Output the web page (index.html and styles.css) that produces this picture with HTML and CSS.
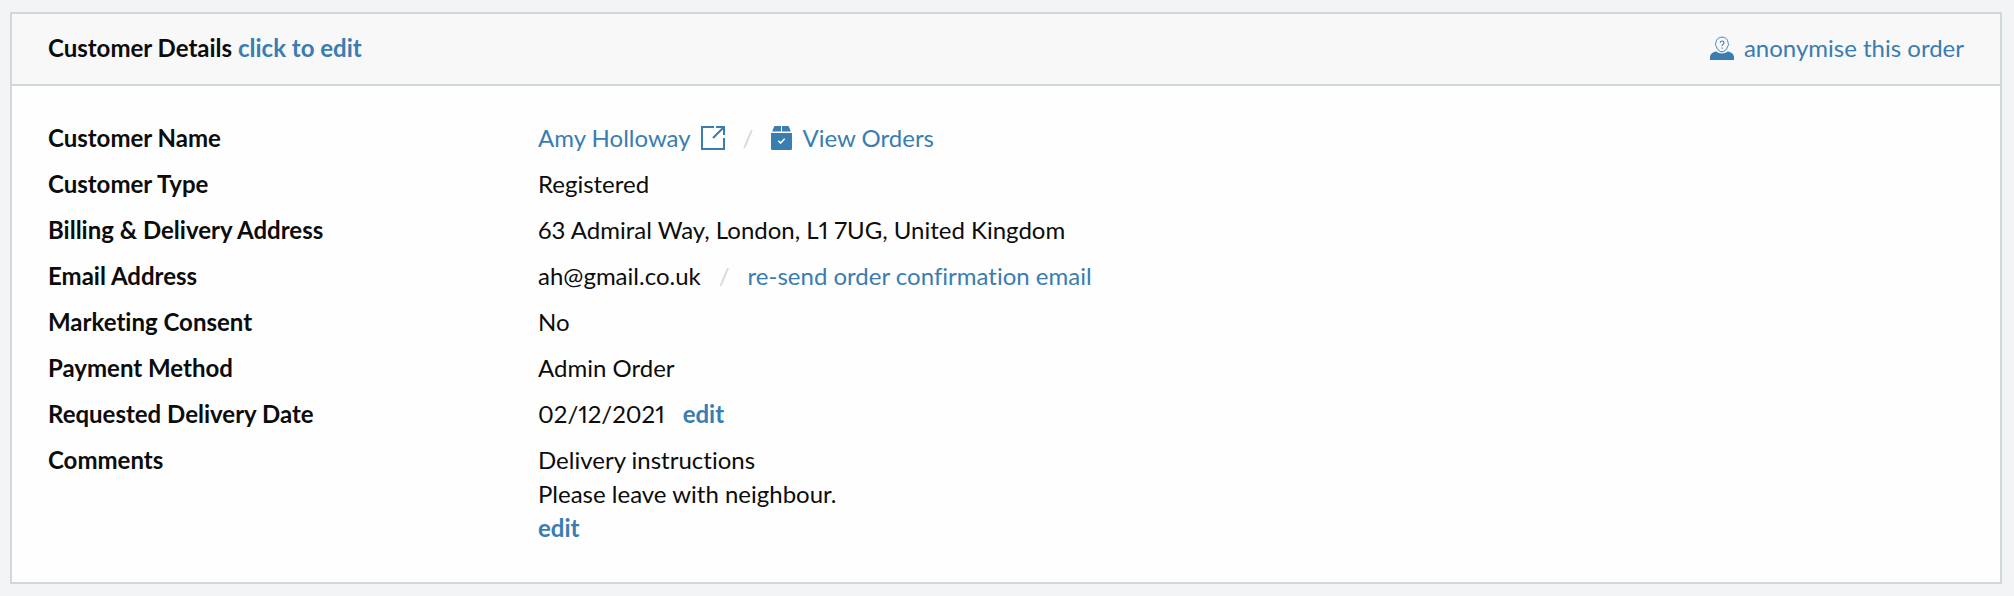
FILE: index.html
```html
<!DOCTYPE html>
<html lang="en">
<head>
    <meta charset="UTF-8">
    <meta name="viewport" content="width=device-width, initial-scale=1.0">
    <title>Customer Details</title>
    <link rel="stylesheet" href="styles.css">
</head>
<body>
    <section class="panel">
        <header class="panel-header">
            <h2 class="panel-title">Customer Details <a href="#edit">click to edit</a></h2>
            <a class="icon-link" href="#anonymise">
                <svg class="icon" width="24" height="24" viewBox="0 0 24 24" fill="none" xmlns="http://www.w3.org/2000/svg" aria-hidden="true">
                    <path d="M0 24v-2.500c0-3.500 2.500-5.500 6.300-6 1.500 1.300 3.500 2 5.700 2s4.200-.7 5.700-2c3.800.5 6.300 2.500 6.300 6V24z" fill="currentColor"/>
                    <path d="M12 1.200c-3.800 0-6 2.600-6 5.600 0 .5-.7.700-.6 1.700.1 1 .8 1.300 1.100 2.200.8 2.900 3 5.100 5.500 5.100s4.700-2.200 5.500-5.100c.3-.9 1-1.200 1.100-2.200.1-1-.6-1.200-.6-1.700 0-3-2.200-5.600-6-5.600z" stroke="currentColor"/>
                    <path d="M10.200 6.700c.1-1.100.9-1.700 1.900-1.700 1.100 0 1.900.7 1.900 1.700 0 1.500-1.900 1.500-1.900 3.400M12.100 11.500v1.300" stroke="currentColor" stroke-width="1.100"/>
                </svg>
                <span>anonymise this order</span>
            </a>
        </header>

        <table class="details">
            <tbody>
                <tr>
                    <th scope="row">Customer Name</th>
                    <td>
                        <div class="value">
                            <a class="icon-link" href="#customer">
                                <span>Amy Holloway</span>
                                <svg class="icon" width="24" height="24" viewBox="0 0 24 24" fill="none" stroke="currentColor" stroke-width="2" xmlns="http://www.w3.org/2000/svg" aria-hidden="true">
                                    <path d="M13 1H1v22h22V12"/>
                                    <path d="M15 1h8v8M23 1L12 12"/>
                                </svg>
                            </a>
                            <span class="divider">/</span>
                            <a class="icon-link" href="#orders">
                                <svg class="icon" width="21" height="24" viewBox="0 0 21 24" fill="currentColor" xmlns="http://www.w3.org/2000/svg" aria-hidden="true">
                                    <path d="M4 0h6v5.500H1.200L3 .8Q3.300 0 4 0zM11 0h6q.7 0 1 .8l1.800 4.700H11z"/>
                                    <path d="M0 7h21v15.500q0 1.500-1.500 1.500h-18Q0 24 0 22.500z"/>
                                    <path d="M7.300 14.800l2.200 2.200 4.200-4.200" fill="none" stroke="#fff" stroke-width="1.600"/>
                                </svg>
                                <span>View Orders</span>
                            </a>
                        </div>
                    </td>
                </tr>
                <tr>
                    <th scope="row">Customer Type</th>
                    <td>Registered</td>
                </tr>
                <tr>
                    <th scope="row">Billing &amp; Delivery Address</th>
                    <td>63 Admiral Way, London, L1 7UG, United Kingdom</td>
                </tr>
                <tr>
                    <th scope="row">Email Address</th>
                    <td>
                        <div class="value">
                            <span>ah@gmail.co.uk</span>
                            <span class="divider">/</span>
                            <a href="#resend">re-send order confirmation email</a>
                        </div>
                    </td>
                </tr>
                <tr>
                    <th scope="row">Marketing Consent</th>
                    <td>No</td>
                </tr>
                <tr>
                    <th scope="row">Payment Method</th>
                    <td>Admin Order</td>
                </tr>
                <tr>
                    <th scope="row">Requested Delivery Date</th>
                    <td>
                        <div class="value">
                            <span>02/12/2021</span>
                            <a class="edit" href="#date">edit</a>
                        </div>
                    </td>
                </tr>
                <tr>
                    <th scope="row">Comments</th>
                    <td>
                        <p>Delivery instructions</p>
                        <p>Please leave with neighbour.</p>
                        <a class="edit" href="#comments">edit</a>
                    </td>
                </tr>
            </tbody>
        </table>
    </section>
</body>
</html>
```
FILE: styles.css
```css
* {
    margin: 0;
    padding: 0;
    box-sizing: border-box;
}

body {
    font-family: 'Lato', Arial, sans-serif;
    font-size: 24px;
    line-height: 34px;
    font-variant-ligatures: none;
    font-variant-numeric: proportional-nums;
    background: #f3f4f6;
    color: #0c0c0c;
    padding: 12px 12px 12px 10px;
}

a {
    color: #397db1;
    text-decoration: none;
}

a:hover {
    text-decoration: underline;
}

.panel {
    background: #fefefe;
    border: 2px solid #cfd9dc;
    padding-bottom: 31px;
}

.panel-header {
    display: flex;
    justify-content: space-between;
    align-items: center;
    padding: 17px 36px 19px;
    margin-bottom: 29px;
    background: #f8f8f8;
    border-bottom: 2px solid #cfd9dc;
}

.panel-title {
    font-size: 24px;
    font-weight: 700;
}

.icon-link {
    display: inline-flex;
    align-items: center;
    gap: 10px;
}

.icon {
    flex: none;
}

.details {
    width: 100%;
    border-collapse: collapse;
    table-layout: fixed;
}

.details th,
.details td {
    padding: 6px 0;
    text-align: left;
    vertical-align: top;
}

.details th {
    width: 526px;
    padding-left: 36px;
    font-weight: 700;
}

.details td {
    padding-right: 36px;
}

.value {
    display: flex;
    flex-wrap: wrap;
    align-items: center;
    column-gap: 18px;
}

.divider {
    color: #cfd9dc;
}

.edit {
    font-weight: 700;
}
```
